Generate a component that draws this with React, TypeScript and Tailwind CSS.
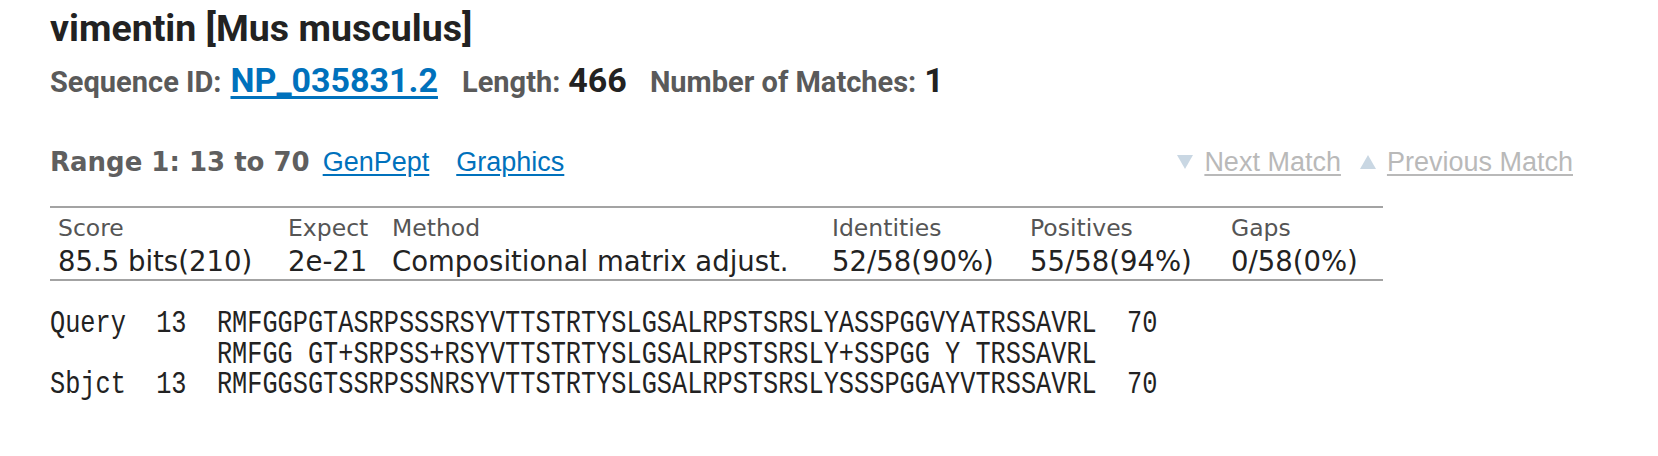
import React from 'react';

const alignment = [
  'Query  13  RMFGGPGTASRPSSSRSYVTTSTRTYSLGSALRPSTSRSLYASSPGGVYATRSSAVRL  70',
  '           RMFGG GT+SRPSS+RSYVTTSTRTYSLGSALRPSTSRSLY+SSPGG Y TRSSAVRL',
  'Sbjct  13  RMFGGSGTSSRPSSNRSYVTTSTRTYSLGSALRPSTSRSLYSSSPGGAYVTRSSAVRL  70',
];

const stats = [
  { head: 'Score', value: '85.5 bits(210)' },
  { head: 'Expect', value: '2e-21' },
  { head: 'Method', value: 'Compositional matrix adjust.' },
  { head: 'Identities', value: '52/58(90%)' },
  { head: 'Positives', value: '55/58(94%)' },
  { head: 'Gaps', value: '0/58(0%)' },
];

const Triangle = ({ up }: { up?: boolean }) => (
  <svg width="18" height="16" viewBox="0 0 18 16" className="mr-[10px] self-center">
    {up ? <path d="M9 1 L17 15 L1 15 Z" fill="#c9d7e3" /> : <path d="M1 1 L17 1 L9 15 Z" fill="#c9d7e3" />}
  </svg>
);

const App = () => {
  return (
    <div className="min-h-[456px] bg-white pl-[50px] pt-[6px]">
      <h1 className="font-['Roboto',sans-serif] text-[37.5px] leading-[44px] font-bold text-[#222]">
        vimentin [Mus musculus]
      </h1>

      <div className="mt-[10px] flex items-baseline font-['Roboto',sans-serif] font-bold leading-[40px]">
        <span className="text-[29px] text-[#5a5a5a]">Sequence ID:</span>
        <a href="#" className="ml-[9px] text-[34px] text-[#0071bc] underline decoration-[3px] underline-offset-[4px]">
          NP_035831.2
        </a>
        <span className="ml-[24px] text-[29px] text-[#5a5a5a]">Length:</span>
        <span className="ml-[8px] text-[34px] text-[#222]">466</span>
        <span className="ml-[23px] text-[29px] text-[#5a5a5a]">Number of Matches:</span>
        <span className="ml-[8px] text-[34px] text-[#222]">1</span>
      </div>

      <div className="mt-[44px] flex w-[1523px] items-baseline justify-between leading-[32px]">
        <div className="flex items-baseline">
          <span className="font-['DejaVu_Sans',sans-serif] text-[26px] font-bold text-[#5f5f5f]">Range 1: 13 to 70</span>
          <a href="#" className="ml-[13px] font-['Liberation_Sans',sans-serif] text-[27px] text-[#0071bc] underline underline-offset-[3px]">
            GenPept
          </a>
          <a href="#" className="ml-[27px] font-['Liberation_Sans',sans-serif] text-[27px] text-[#0071bc] underline underline-offset-[3px]">
            Graphics
          </a>
        </div>
        <div className="flex items-baseline font-['Liberation_Sans',sans-serif] text-[27px] text-[#b9b9b9]">
          <Triangle />
          <a href="#" className="underline underline-offset-[3px]">Next Match</a>
          <span className="ml-[18px] flex items-baseline">
            <Triangle up />
            <a href="#" className="underline underline-offset-[3px]">Previous Match</a>
          </span>
        </div>
      </div>

      <div className="mt-[28px] w-[1333px] border-y-2 border-[#a3a3a3] pt-[3px] pb-[2px] font-['DejaVu_Sans',sans-serif]">
        <div className="grid grid-cols-[230px_104px_440px_198px_201px_1fr] pl-[8px]">
          {stats.map((s) => (
            <div key={s.head} className="text-[23.5px] leading-[35px] text-[#555]">{s.head}</div>
          ))}
          {stats.map((s) => (
            <div key={s.head + 'v'} className="whitespace-nowrap text-[27.5px] leading-[31px] text-[#222]">{s.value}</div>
          ))}
        </div>
      </div>

      <pre className="mt-[28px] origin-left scale-x-[0.79] font-['Liberation_Mono',monospace] text-[32px] leading-[30.5px] text-[#222]">
        {alignment.join('\n')}
      </pre>
    </div>
  );
};

export default App;
